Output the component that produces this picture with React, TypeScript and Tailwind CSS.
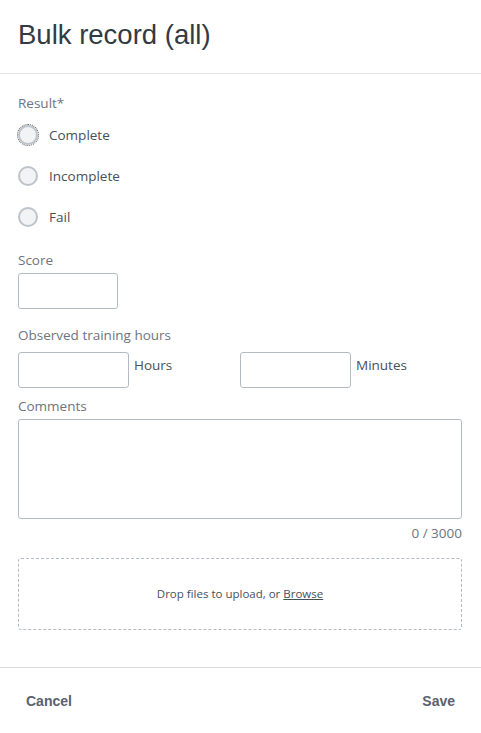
import React from "react";

const body = { fontFamily: '"Open Sans", "Noto Sans", sans-serif' };

function Radio({ label, focused }: { label: string; focused?: boolean }) {
  return (
    <label className="flex items-center h-[20px] gap-[11px] cursor-pointer">
      <span
        className={
          "w-[20px] h-[20px] rounded-full border-2 border-[#bcc3ca] bg-[#f1f3f5] " +
          (focused ? "outline-1 outline-dotted outline-[#555] outline-offset-0" : "")
        }
      />
      <span className="text-[13.5px] text-[#464f5a]">{label}</span>
    </label>
  );
}

export default function App() {
  return (
    <div className="w-[481px] h-[733px] bg-white flex flex-col" style={body}>
      <header className="h-[74px] border-b border-[#e3e3e3] flex items-center px-[18px]">
        <h1
          className="text-[27.5px] text-[#333a42] leading-none -mt-[4px]"
          style={{ fontFamily: '"Liberation Sans", Arial, sans-serif' }}
        >
          Bulk record (all)
        </h1>
      </header>

      <main className="flex-1 pl-[18px] pr-[19px] pt-[20px]">
        <div className="text-[13.5px] text-[#6b7580] leading-[18px]">Result*</div>
        <div className="flex flex-col gap-[21px] mt-[13px]">
          <Radio label="Complete" focused />
          <Radio label="Incomplete" />
          <Radio label="Fail" />
        </div>

        <div className="text-[13.5px] text-[#6b7580] leading-[18px] mt-[24px]">Score</div>
        <input className="block mt-[4px] w-[100px] h-[36px] border border-[#b4bbc2] rounded-[3px]" />

        <div className="text-[13.5px] text-[#6b7580] leading-[18px] mt-[17px]">
          Observed training hours
        </div>
        <div className="flex mt-[8px]">
          <div className="flex w-[222px]">
            <input className="w-[111px] h-[36px] border border-[#b4bbc2] rounded-[3px]" />
            <span className="ml-[5px] text-[13.5px] text-[#464f5a] leading-[18px] mt-[4px]">Hours</span>
          </div>
          <div className="flex">
            <input className="w-[111px] h-[36px] border border-[#b4bbc2] rounded-[3px]" />
            <span className="ml-[5px] text-[13.5px] text-[#464f5a] leading-[18px] mt-[4px]">Minutes</span>
          </div>
        </div>

        <div className="text-[13.5px] text-[#6b7580] leading-[18px] mt-[9px]">Comments</div>
        <textarea className="block mt-[4px] w-full h-[100px] border border-[#b4bbc2] rounded-[3px] resize-none" />
        <div className="text-right text-[13.5px] text-[#6b7580] leading-[18px] mt-[5px]">0 / 3000</div>

        <div className="mt-[16px] h-[72px] border border-dashed border-[#b4bbc2] rounded-[3px] flex items-center justify-center text-[11.5px] text-[#464f5a]">
          <span>
            Drop files to upload, or <span className="underline">Browse</span>
          </span>
        </div>
      </main>

      <footer
        className="h-[66px] border-t border-[#dcdcdc] flex items-center justify-between px-[26px]"
        style={{ fontFamily: '"Liberation Sans", Arial, sans-serif' }}
      >
        <button className="text-[14px] font-bold text-[#59626e] mt-[2px]">Cancel</button>
        <button className="text-[14px] font-bold text-[#59626e] mt-[2px]">Save</button>
      </footer>
    </div>
  );
}
